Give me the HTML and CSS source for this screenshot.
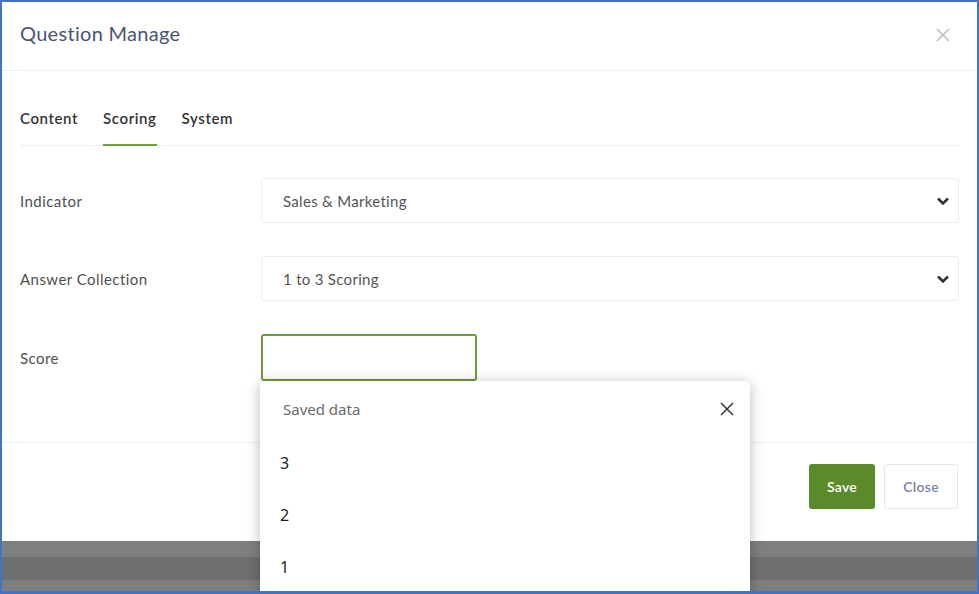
FILE: index.html
```html
<!DOCTYPE html>
<html>
<head>
<meta charset="utf-8">
<link rel="stylesheet" href="styles.css">
</head>
<body>
<div class="frame">
  <div class="modal">
    <div class="modal-header">
      <div class="title">Question Manage</div>
      <svg class="hclose" width="16" height="16" viewBox="0 0 16 16"><path d="M2 2 L14 14 M14 2 L2 14" stroke="#bdbdbd" stroke-width="1.6" fill="none"/></svg>
    </div>
    <div class="modal-body">
      <div class="tabs">
        <div class="tab">Content</div>
        <div class="tab active">Scoring</div>
        <div class="tab">System</div>
      </div>
      <div class="form">
        <div class="row">
          <div class="label">Indicator</div>
          <div class="select"><span>Sales &amp; Marketing</span>
            <svg class="chev" width="14" height="10" viewBox="0 0 14 10"><path d="M2 2.5 L7 7.5 L12 2.5" stroke="#333" stroke-width="2.6" fill="none"/></svg>
          </div>
        </div>
        <div class="row">
          <div class="label">Answer Collection</div>
          <div class="select"><span>1 to 3 Scoring</span>
            <svg class="chev" width="14" height="10" viewBox="0 0 14 10"><path d="M2 2.5 L7 7.5 L12 2.5" stroke="#333" stroke-width="2.6" fill="none"/></svg>
          </div>
        </div>
        <div class="row">
          <div class="label">Score</div>
          <div class="score-wrap">
            <div class="score-input"></div>
            <div class="autofill">
              <div class="af-head"><span>Saved data</span>
                <svg width="16" height="16" viewBox="0 0 16 16"><path d="M2 2 L14 14 M14 2 L2 14" stroke="#333" stroke-width="1.5" fill="none"/></svg>
              </div>
              <div class="af-item">3</div>
              <div class="af-item">2</div>
              <div class="af-item">1</div>
            </div>
          </div>
        </div>
      </div>
    </div>
    <div class="modal-footer">
      <div class="btn save">Save</div>
      <div class="btn close">Close</div>
    </div>
  </div>
  <div class="backdrop">
    <div class="band light"></div>
    <div class="band dark"></div>
    <div class="band light"></div>
  </div>
</div>
</body>
</html>
```

FILE: styles.css
```css
html, body {
  margin: 0;
  padding: 0;
  width: 979px;
  height: 594px;
  overflow: hidden;
  background: #ffffff;
  font-family: Lato, "Liberation Sans", sans-serif;
}
.frame {
  box-sizing: border-box;
  width: 979px;
  height: 594px;
  border: 2px solid #4472c4;
  border-bottom-width: 3px;
  display: flex;
  flex-direction: column;
  overflow: hidden;
}
.modal {
  background: #fff;
  display: flex;
  flex-direction: column;
  height: 539px;
}
.modal-header {
  height: 68px;
  border-bottom: 1px solid #eceef3;
  display: flex;
  align-items: center;
  justify-content: space-between;
  padding: 0 26px 0 18px;
}
.title {
  font-size: 20px;
  letter-spacing: 0.3px;
  color: #4a5373;
  margin-top: -6px;
}
.hclose {
  margin-top: -3px;
}
.modal-body {
  padding: 37px 18px 0 18px;
  flex: 1;
}
.tabs {
  display: flex;
  border-bottom: 1px solid #eceef2;
}
.tab {
  font-size: 15px;
  letter-spacing: 0.6px;
  font-weight: 600;
  color: #333;
  line-height: 20px;
  padding-bottom: 16px;
  border-bottom: 2px solid transparent;
  margin-bottom: -1px;
  margin-right: 25px;
}
.tab.active {
  border-bottom-color: #6f9e3f;
}
.form {
  padding-top: 32px;
  display: flex;
  flex-direction: column;
  gap: 33px;
}
.row {
  display: grid;
  grid-template-columns: 241px 1fr;
  align-items: center;
}
.label {
  font-size: 15px;
  letter-spacing: 0.45px;
  color: #505050;
}
.select {
  box-sizing: border-box;
  height: 45px;
  border: 1px solid #eaecf1;
  border-radius: 3px;
  display: flex;
  align-items: center;
  justify-content: space-between;
  padding: 0 8px 0 21px;
  font-size: 15px;
  letter-spacing: 0.3px;
  color: #555;
}
.chev {
  display: block;
}
.score-wrap {
  position: relative;
}
.score-input {
  box-sizing: border-box;
  width: 216px;
  height: 47px;
  border: 2px solid #6e9a3e;
  border-radius: 3px;
}
.autofill {
  position: absolute;
  left: -1px;
  top: 47px;
  width: 490px;
  height: 240px;
  background: #fff;
  border-radius: 5px;
  box-shadow: 0 2px 14px rgba(0,0,0,0.28);
  font-family: "Noto Sans", "Open Sans", sans-serif;
  z-index: 5;
}
.af-head {
  display: flex;
  align-items: center;
  justify-content: space-between;
  padding: 17px 15px 0 23px;
  height: 22px;
  font-size: 15px;
  color: #6a6a6a;
}
.af-head svg {
  display: block;
}
.af-item {
  font-size: 16px;
  color: #222;
  padding-left: 20px;
  height: 52px;
  line-height: 52px;
}
.af-head + .af-item {
  margin-top: 17px;
}
.modal-footer {
  border-top: 1px solid #eceef2;
  height: 99px;
  box-sizing: border-box;
  display: flex;
  justify-content: flex-end;
  align-items: flex-start;
  padding: 21px 19px 0 0;
  gap: 9px;
}
.btn {
  box-sizing: border-box;
  height: 45px;
  border-radius: 3px;
  display: flex;
  align-items: center;
  justify-content: center;
  font-size: 14px;
  letter-spacing: 0.3px;
  font-weight: 600;
}
.btn.save {
  width: 66px;
  background: #5b8a2b;
  color: #fff;
}
.btn.close {
  width: 74px;
  border: 1px solid #e6e8ee;
  color: #7a80a8;
  background: #fff;
}
.backdrop {
  flex: 1;
  display: flex;
  flex-direction: column;
}
.band.light {
  height: 16px;
  background: #7f7f7f;
}
.band.dark {
  height: 23px;
  background: #707070;
}
.band.light:last-child {
  flex: 1;
  height: auto;
}
```
